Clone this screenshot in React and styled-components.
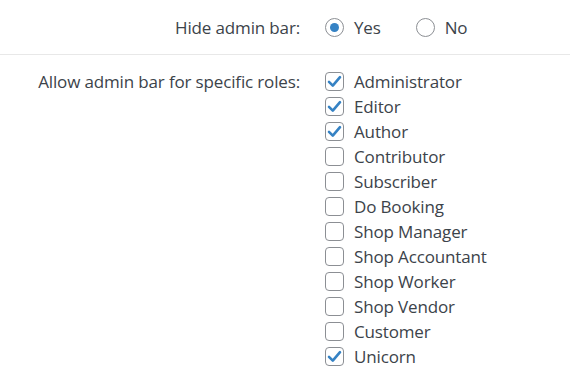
import React from "react";
import styled, { createGlobalStyle } from "styled-components";

const GlobalStyle = createGlobalStyle`
  body {
    margin: 0;
    background: #fff;
    font-family: "Open Sans", "Noto Sans", sans-serif;
    color: #3c434a;
  }
`;

const Page = styled.div`
  width: 570px;
`;

const Row = styled.div`
  display: grid;
  grid-template-columns: 300px 1fr;
  column-gap: 25px;
  padding: ${props => props.pad};
  border-bottom: ${props => (props.divider ? "1px solid #e8e8e8" : "none")};
`;

const Label = styled.div`
  text-align: right;
  font-size: 17px;
  line-height: 25px;
  letter-spacing: -0.15px;
`;

const Options = styled.div`
  display: flex;
  flex-direction: ${props => (props.column ? "column" : "row")};
  gap: ${props => (props.column ? "0" : "35px")};
`;

const Choice = styled.label`
  display: flex;
  align-items: center;
  gap: 10px;
  height: 25px;
  font-size: 17px;
  letter-spacing: -0.15px;
`;

const Radio = styled.span`
  box-sizing: border-box;
  width: 19px;
  height: 19px;
  border-radius: 50%;
  border: 1px solid #8c8f94;
  display: flex;
  align-items: center;
  justify-content: center;
  &::after {
    content: "";
    width: 9px;
    height: 9px;
    border-radius: 50%;
    background: ${props => (props.checked ? "#3582c4" : "transparent")};
  }
`;

const Box = styled.span`
  box-sizing: border-box;
  width: 19px;
  height: 19px;
  border-radius: 4px;
  border: 1px solid #8c8f94;
  display: flex;
  align-items: center;
  justify-content: center;
`;

const Check = () => (
  <svg width="15" height="13" viewBox="0 0 15 13">
    <path
      d="M2 6.8 L5.8 10.6 L13 2.2"
      fill="none"
      stroke="#3582c4"
      strokeWidth="2.6"
      strokeLinecap="round"
      strokeLinejoin="round"
    />
  </svg>
);

const roles = [
  ["Administrator", true],
  ["Editor", true],
  ["Author", true],
  ["Contributor", false],
  ["Subscriber", false],
  ["Do Booking", false],
  ["Shop Manager", false],
  ["Shop Accountant", false],
  ["Shop Worker", false],
  ["Shop Vendor", false],
  ["Customer", false],
  ["Unicorn", true]
];

const App = () => (
  <Page>
    <GlobalStyle />
    <Row divider pad="15px 0 14px">
      <Label>Hide admin bar:</Label>
      <Options>
        <Choice>
          <Radio checked />
          Yes
        </Choice>
        <Choice>
          <Radio />
          No
        </Choice>
      </Options>
    </Row>
    <Row pad="14px 0">
      <Label>Allow admin bar for specific roles:</Label>
      <Options column>
        {roles.map(([name, on]) => (
          <Choice key={name}>
            <Box>{on && <Check />}</Box>
            {name}
          </Choice>
        ))}
      </Options>
    </Row>
  </Page>
);

export default App;
